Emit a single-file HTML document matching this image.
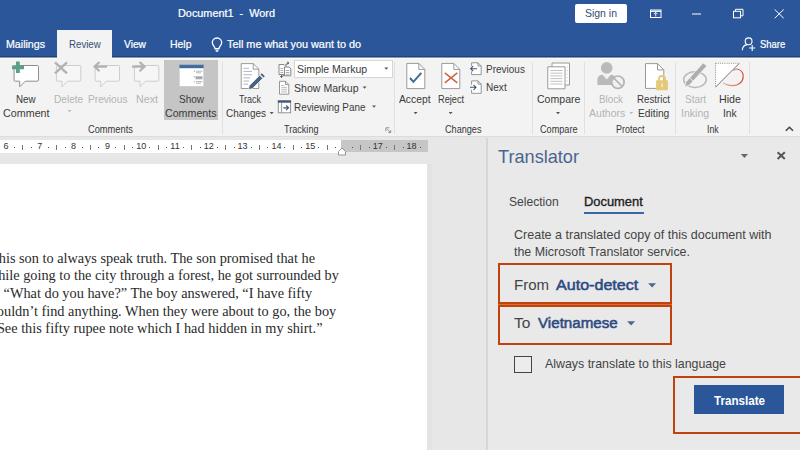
<!DOCTYPE html>
<html><head><meta charset="utf-8">
<style>
*{box-sizing:border-box;margin:0;padding:0}
html,body{width:800px;height:450px;overflow:hidden;background:#e7e7e7;font-family:"Liberation Sans",sans-serif;}
body{position:relative}
.abs{position:absolute}
.t{position:absolute;white-space:nowrap;line-height:1;transform-origin:left top}
.doc{font-family:"Liberation Serif",serif;font-size:14.3px;color:#2a2a2a;transform:none}
.rn{top:142px;font-size:9px;color:#333;transform:translateX(-50%)}
#title{left:0;top:0;width:800px;height:57.4px;background:#2b579a}
#ribbon{left:0;top:57.4px;width:800px;height:79.6px;background:#f3f3f3;border-bottom:1px solid #dcdcdc}
.sep{position:absolute;top:62px;width:1px;height:72px;background:#e0e0e0}
svg{position:absolute;overflow:visible}
</style></head><body>
<div id="title" class="abs"></div>
<div class="abs" style="left:0;top:56px;width:800px;height:1px;background:#20447a"></div>
<div class="abs" style="left:575px;top:4px;width:52px;height:18.5px;background:#fff;border-radius:2px"></div>
<div id="ribbon" class="abs"></div>
<div class="abs" style="left:0;top:57px;width:800px;height:1px;background:#8799b1"></div>
<div class="abs" style="left:0;top:58px;width:800px;height:1px;background:#f9fbfb"></div>
<div class="abs" style="left:57px;top:30px;width:55px;height:29px;background:#f3f3f3"></div>
<div class="abs" style="left:164px;top:59.8px;width:54.2px;height:60px;background:#c5c5c5"></div>
<div class="sep" style="left:222px"></div>
<div class="abs" style="left:293.6px;top:60.4px;width:99.3px;height:18px;background:#fff;border:1px solid #d6d6d6"></div>
<div class="sep" style="left:394.3px"></div>
<div class="sep" style="left:532px"></div>
<div class="sep" style="left:584px"></div>
<div class="sep" style="left:675px"></div>
<div class="sep" style="left:749px"></div>

<!-- ruler -->
<div class="abs" style="left:0;top:140px;width:341px;height:13px;background:#fff"></div>
<div class="abs" style="left:341px;top:140px;width:86.5px;height:12px;background:#c6c6c6"></div>

<!-- page -->
<div class="abs" style="left:487px;top:137px;width:313px;height:313px;background:#e9e9e9"></div>
<div class="abs" style="left:0;top:163.5px;width:431.5px;height:287px;background:#e3e3e3"></div>
<div class="abs" style="left:0;top:163.5px;width:427.3px;height:287px;background:#fff"></div>

<!-- pane -->
<div class="abs" style="left:485.7px;top:138px;width:2px;height:312px;background:#d6d6d6"></div>
<div class="abs" style="left:583.8px;top:212.3px;width:60.5px;height:1.9px;background:#3a66a5"></div>
<div class="abs" style="left:498.3px;top:303px;width:173.7px;height:3px;background:#dd6a2e"></div>
<div class="abs" style="left:498.3px;top:262.7px;width:173.7px;height:41.3px;border:2.6px solid #c0430d"></div>
<div class="abs" style="left:498.3px;top:304.7px;width:173.7px;height:40.6px;border:2.6px solid #c0430d"></div>
<div class="abs" style="left:514px;top:355.5px;width:18px;height:17.5px;border:1.4px solid #444;background:#ececec"></div>
<div class="abs" style="left:672.5px;top:376px;width:130px;height:57.5px;border:2.6px solid #c0430d"></div>
<div class="abs" style="left:694px;top:385.4px;width:89.6px;height:28.2px;background:#2b579a"></div>
<svg width="800" height="450" viewBox="0 0 800 450" style="left:0;top:0" fill="none">
<!-- title bar icons -->
<g stroke="#fff" stroke-width="1">
 <!-- bulb -->
 <path d="M217 38c-2.900 0-4.700 2.100-4.700 4.600 0 1.600 .8 2.600 1.600 3.600 .7 .8 1.100 1.400 1.100 2.400h4c0-1 .4-1.600 1.100-2.400 .8-1 1.600-2 1.600-3.600 0-2.500-1.800-4.600-4.700-4.600z" stroke-width="1.300"/>
 <path d="M215.300 50h3.400M215.800 51.300h2.400" stroke-width="1.100"/>
 <!-- ribbon display -->
 <rect x="650.500" y="10" width="10.500" height="7.500"/>
 <path d="M650.500 11.300h10.500" stroke-width="1.200"/>
 <path d="M655.750 16.500v-4M653.900 14.200l1.850-1.850 1.850 1.850" stroke-width=".9"/>
 <!-- minimize -->
 <path d="M692 14h9"/>
 <!-- restore -->
 <rect x="733.500" y="11.300" width="7" height="6.500"/>
 <path d="M735.500 11.300v-2h7.500v6.500h-2"/>
 <!-- close -->
 <path d="M774.700 9.500l9 8.700M783.700 9.500l-9 8.700"/>
 <!-- share -->
 <circle cx="748.600" cy="41.300" r="3.400" stroke-width="1.100"/>
 <path d="M742.300 50.300c.2-3.400 2.300-5.400 5-5.700" stroke-width="1.100"/>
 <path d="M752.200 45v6M749.200 48h6" stroke-width="1.100"/>
</g>
<!-- New comment -->
<g>
 <path d="M15.300 65.500h22a1.200 1.200 0 0 1 1.200 1.200v13.300a1.200 1.200 0 0 1-1.200 1.200h-12l-5.600 5.600v-5.600h-4.400a1.200 1.200 0 0 1-1.200-1.200v-13.300a1.200 1.200 0 0 1 1.200-1.200z" fill="#fff" stroke="#8e8e8e" stroke-width="1"/>
 <path d="M12 67.400h12M17.900 61.500v11.600" stroke="#5b9f8a" stroke-width="3.800"/>
</g>
<!-- Delete -->
<g>
 <path d="M57.600 65.500h22a1.200 1.200 0 0 1 1.200 1.200v13.300a1.200 1.200 0 0 1-1.200 1.200h-12l-5.600 5.600v-5.600h-4.400a1.200 1.200 0 0 1-1.200-1.200v-13.300a1.200 1.200 0 0 1 1.200-1.200z" fill="#f6f6f6" stroke="#cdcdcd" stroke-width="1"/>
 <path d="M55 62.300l12 11M67 62.300l-12 11" stroke="#b2b2b2" stroke-width="2.300"/>
</g>
<!-- Previous -->
<g>
 <path d="M96.300 65.500h22a1.200 1.200 0 0 1 1.200 1.200v13.300a1.200 1.200 0 0 1-1.200 1.200h-12l-5.600 5.600v-5.600h-4.400a1.200 1.200 0 0 1-1.200-1.200v-13.300a1.200 1.200 0 0 1 1.200-1.200z" fill="#f6f6f6" stroke="#cdcdcd" stroke-width="1"/>
 <path d="M107 66.600h-12M99.500 62l-4.900 4.600 4.900 4.600" stroke="#b2b2b2" stroke-width="2.200"/>
</g>
<!-- Next -->
<g>
 <path d="M135.600 65.500h22a1.200 1.200 0 0 1 1.200 1.200v13.300a1.200 1.200 0 0 1-1.200 1.200h-12l-5.600 5.600v-5.600h-4.400a1.200 1.200 0 0 1-1.200-1.200v-13.300a1.200 1.200 0 0 1 1.200-1.200z" fill="#f6f6f6" stroke="#cdcdcd" stroke-width="1"/>
 <path d="M132 66.600h12M139.600 62l4.900 4.600-4.900 4.600" stroke="#b2b2b2" stroke-width="2.200"/>
</g>
<!-- Show comments -->
<g>
 <rect x="179" y="64.600" width="25" height="22" fill="#fff"/>
 <rect x="179" y="64.600" width="25" height="3.600" fill="#3f6a9b"/>
 <rect x="179.250" y="64.850" width="24.500" height="21.500" stroke="#a9b4c0" stroke-width=".5"/>
 <path d="M196 71.200h6.500M196 72.800h5" stroke="#9a9a9a" stroke-width=".7"/>
 <rect x="195.500" y="76.300" width="7" height="3" fill="#a3a9af"/>
 <path d="M196 81.600h6.500M196 83.200h5" stroke="#9a9a9a" stroke-width=".7"/>
 <path d="M194.300 70.500v1.500M194.300 76v1.500M194.300 81v1.500" stroke="#888" stroke-width=".7"/>
</g>
<!-- Track changes -->
<g>
 <path d="M241.200 63.600h12l5.600 5.600v19.300h-17.600z" fill="#fff" stroke="#9a9a9a" stroke-width="1"/>
 <path d="M253.200 63.600v5.600h5.600" stroke="#9a9a9a" stroke-width="1"/>
 <path d="M243.500 68.300h5.500M243.500 74.700h8.500M243.500 81h5.500" stroke="#a5a5a5" stroke-width=".8"/>
 <path d="M243.500 71.400h8.500M243.500 77.900h6.500M243.500 84.200h4.500" stroke="#8aa5c3" stroke-width=".8"/>
 <path d="M248.300 89.600l1.100-4 10.300-10.300 3 3-10.300 10.300z" fill="#47627f" stroke="#f3f3f3" stroke-width=".7"/>
 <path d="M260.500 74.500l1.300-1.300 3 3-1.300 1.300z" fill="#47627f"/>
</g>
<!-- Display for review small icon -->
<g stroke="#7a7a7a" stroke-width=".9">
 <path d="M279 64.500h5l2 2v8h-7z" fill="#fff"/>
 <path d="M284.500 67h4.500l1.800 1.800v7h-6.300z" fill="#fff"/>
 <path d="M280.300 68.500h3M280.300 70.500h3M280.300 72.500h3M285.800 70.500h3.500M285.800 72.500h3.500M285.800 74.300h3.500" stroke-width=".6"/>
 <path d="M286 65.500c0-1.500 1-2.500 2.500-2.500M287.400 62l1.400 1-1.400 1.200" stroke="#444" stroke-width="1"/>
 <path d="M283.500 75.300c0 .8-1 1.200-2.500 1.200M282 75.500l-1.400 1 1.400 1.200" stroke="#444" stroke-width="1"/>
</g>
<!-- Show markup small icon -->
<g stroke="#8a8a8a" stroke-width=".9">
 <path d="M279.500 81.300h6l3.300 3.300v9.600h-9.300z" fill="#fff"/>
 <path d="M285.500 81.300v3.300h3.300" />
 <path d="M281.300 85.500h3M281.300 87.700h5.700M281.300 89.800h5.700M281.300 91.900h5.700" stroke-width=".6"/>
</g>
<!-- Reviewing pane small icon -->
<g>
 <rect x="278.300" y="101" width="12.300" height="11.800" fill="#fff" stroke="#8a8a8a" stroke-width=".9"/>
 <rect x="277.850" y="100.400" width="13.200" height="2.300" fill="#3f5675"/>
 <path d="M281.600 102.700v10" stroke="#8a8a8a" stroke-width=".9"/>
 <path d="M283.300 107.800h5M286.100 105.400l2.400 2.400-2.400 2.400" stroke="#43566f" stroke-width="1.200"/>
</g>
<!-- dropdown arrows in ribbon -->
<g fill="#555">
 <path d="M69.500 112.200l-2 -2.200h4z" fill="#bdbdbd"/>
 <path d="M271.700 114.300l-2-2.2h4z"/>
 <path d="M386.300 69.800l-2-2.200h4z"/>
 <path d="M364.600 88.700l-2-2.2h4z"/>
 <path d="M374 107.800l-2-2.2h4z"/>
 <path d="M415.600 114.300l-2-2.2h4z"/>
 <path d="M450.600 114.300l-2-2.2h4z"/>
 <path d="M558 114.300l-2-2.2h4z"/>
 <path d="M631.300 114.300l-2-2.2h4z" fill="#bdbdbd"/>
</g>
<!-- dialog launcher -->
<g stroke="#777" stroke-width=".8" transform="translate(1.4 .3)">
 <path d="M384.500 131v-3.500h3.500"/>
 <path d="M386 129l3 3M389.300 129.800v2.500h-2.500"/>
</g>
<!-- Accept -->
<g>
 <path d="M406.800 63.400h12l6 6v19.200h-18z" fill="#fff" stroke="#9a9a9a" stroke-width="1"/>
 <path d="M418.800 63.400v6h6" stroke="#9a9a9a" stroke-width="1"/>
 <path d="M410 78l3.400 3.800 7.900-9" stroke="#3f6c93" stroke-width="2"/>
</g>
<!-- Reject -->
<g>
 <path d="M441.800 63.400h12l6 6v19.200h-18z" fill="#fff" stroke="#9a9a9a" stroke-width="1"/>
 <path d="M453.800 63.400v6h6" stroke="#9a9a9a" stroke-width="1"/>
 <path d="M444.800 72.800l12.500 10M457.300 72.800l-12.500 10" stroke="#d0623f" stroke-width="1.500"/>
</g>
<!-- Previous/Next change small -->
<g stroke="#8a8a8a" stroke-width=".9">
 <path d="M471.600 66.300v-3.500h6.400l3.200 3.200v8.600h-9.600v-3.400" fill="#fff"/>
 <path d="M478 62.800v3.200h3.200"/>
 <path d="M477 68.700h-6M473.200 66.200l-2.500 2.500 2.500 2.500" stroke="#3f5673" stroke-width="1.100" fill="none"/>
 <path d="M471.600 84.800v-3.900h6.400l3.200 3.200v9.200h-9.600v-3.600" fill="#fff"/>
 <path d="M478 80.900v3.200h3.200"/>
 <path d="M470 87.300h6M473.500 84.800l2.500 2.500-2.500 2.500" stroke="#3f5673" stroke-width="1.100" fill="none"/>
</g>
<!-- Compare -->
<g stroke="#9a9a9a" stroke-width="1">
 <path d="M552 63h17.500v22h-17.500z" fill="#fff"/>
 <path d="M547.800 66.800h17.200v22h-17.200z" fill="#fff"/>
 <path d="M550.300 70.500h12.200M550.300 73.200h12.200M550.300 75.900h12.200M550.300 78.600h12.200M550.300 81.300h12.200M550.300 84h12.200" stroke-width=".7" stroke="#a8a8a8"/>
 <path d="M567.200 66.500v1M567.200 70v1M567.200 73.500v1M567.200 77v1M567.200 80.500v1" stroke-width=".7" stroke="#a8a8a8"/>
</g>
<!-- Block authors -->
<g>
 <circle cx="606.700" cy="67.900" r="5.800" fill="#bababa"/>
 <path d="M597.400 85v-5c0-3.300 2.300-5.200 5.300-5.200l4 4.600 4-4.600c3 0 5.300 1.900 5.300 5.200v5z" fill="#bababa"/>
 <circle cx="617.900" cy="82.200" r="6.200" fill="#f1f1f1" stroke="#b4b4b4" stroke-width="1.700"/>
 <path d="M613.600 77.900l8.600 8.600" stroke="#b4b4b4" stroke-width="1.700"/>
</g>
<!-- Restrict editing -->
<g>
 <path d="M645.500 63.600h12l6.300 6.300v18.500h-18.300z" fill="#fff" stroke="#9a9a9a" stroke-width="1"/>
 <path d="M657.500 63.600v6.300h6.300" stroke="#9a9a9a" stroke-width="1"/>
 <path d="M659 81v-2a3 3 0 0 1 6 0v2" stroke="#e3c878" stroke-width="1.800"/>
 <rect x="656.100" y="80.300" width="11.800" height="9.900" rx=".8" fill="#e5c978"/>
 <rect x="661.300" y="83.500" width="1.400" height="3.600" fill="#f8efd0"/>
</g>
<!-- Start inking -->
<g>
 <ellipse cx="695" cy="79.600" rx="11.300" ry="7.900" stroke="#b9b9b9" stroke-width="1.500"/>
 <path d="M684.500 87.200L686.100 81.700L703.200 62.900L706.800 66.100L689.600 84.900Z" fill="#adadad" stroke="#f3f3f3" stroke-width=".8"/>
 <path d="M689.600 77.800l3.600 3.300" stroke="#f3f3f3" stroke-width=".9"/>
</g>
<!-- Hide ink -->
<defs><linearGradient id="hg" x1="723" y1="0" x2="743" y2="0" gradientUnits="userSpaceOnUse"><stop offset="0" stop-color="#e9b9ad"/><stop offset=".55" stop-color="#dc7a63"/><stop offset="1" stop-color="#d2452b"/></linearGradient></defs>
<g>
 <path d="M715.500 87v-23.700h23.500z" fill="#fff"/>
 <path d="M715.500 63.300h24M715.500 63.300v24" stroke="#777" stroke-width=".8" stroke-dasharray="1 1.200"/>
 <path d="M715.500 87.200l23.800-23.900" stroke="#666" stroke-width=".9"/>
 <path d="M733.500 70.500C736.500 67.300 743.300 70 743.200 76.500C743.100 82.500 738 85.600 733 85.600C729 85.600 725.500 84.600 723 82.800" stroke="url(#hg)" stroke-width="1.100"/>
</g>
<!-- collapse caret -->
<path d="M785.800 130.800l3.600-3.600 3.600 3.600" stroke="#444" stroke-width="1.500"/>
<!-- ruler indent marker -->
<path d="M338.500 155v-3.500l3.500-3.500 3.500 3.500v3.500z" fill="#fff" stroke="#8a8a8a" stroke-width=".9"/>
<!-- pane icons -->
<path d="M744.400 158l-3.600-4h7.200z" fill="#666"/>
<path d="M777.600 152.200l7.200 6.800M784.800 152.200l-7.200 6.800" stroke="#555" stroke-width="2"/>
<path d="M652.100 287.500l-4-4.300h8z" fill="#4d668f"/>
<path d="M631.100 325.600l-4-4.300h8z" fill="#4d668f"/>
</svg>

<div class="t" style="left:177.5px;top:8.4px;font-size:10.8px;color:#fff;-webkit-text-stroke:.22px currentColor;transform:scaleX(1.006)">Document1&nbsp; -&nbsp; Word</div>
<div class="t" style="left:5.5px;top:38.9px;font-size:10.8px;color:#fff;-webkit-text-stroke:.22px currentColor;transform:scaleX(0.985)">Mailings</div>
<div class="t" style="left:68.8px;top:38.9px;font-size:10.8px;color:#364d75;transform:scaleX(0.897)">Review</div>
<div class="t" style="left:123.8px;top:38.9px;font-size:10.8px;color:#fff;-webkit-text-stroke:.22px currentColor;transform:scaleX(0.948)">View</div>
<div class="t" style="left:169.5px;top:38.9px;font-size:10.8px;color:#fff;-webkit-text-stroke:.22px currentColor;transform:scaleX(0.968)">Help</div>
<div class="t" style="left:226.8px;top:38.9px;font-size:10.8px;color:#fff;-webkit-text-stroke:.22px currentColor;transform:scaleX(1.007)">Tell me what you want to do</div>
<div class="t" style="left:585.0px;top:8.4px;font-size:10.8px;color:#364d75;transform:scaleX(0.969)">Sign in</div>
<div class="t" style="left:760.4px;top:38.9px;font-size:10.8px;color:#fff;-webkit-text-stroke:.22px currentColor;transform:scaleX(0.875)">Share</div>
<div class="t" style="left:16.4px;top:93.6px;font-size:10.8px;color:#3a3a3a;transform:scaleX(0.907)">New</div>
<div class="t" style="left:2.8px;top:108.0px;font-size:10.8px;color:#3a3a3a;transform:scaleX(0.995)">Comment</div>
<div class="t" style="left:54.4px;top:93.6px;font-size:10.8px;color:#b4b4b4;transform:scaleX(0.935)">Delete</div>
<div class="t" style="left:88.0px;top:93.6px;font-size:10.8px;color:#b4b4b4;transform:scaleX(0.940)">Previous</div>
<div class="t" style="left:135.5px;top:93.6px;font-size:10.8px;color:#b4b4b4;transform:scaleX(0.991)">Next</div>
<div class="t" style="left:178.9px;top:93.6px;font-size:10.8px;color:#3a3a3a;transform:scaleX(0.929)">Show</div>
<div class="t" style="left:165.0px;top:108.0px;font-size:10.8px;color:#3a3a3a;transform:scaleX(0.987)">Comments</div>
<div class="t" style="left:238.6px;top:93.6px;font-size:10.8px;color:#3a3a3a;transform:scaleX(0.827)">Track</div>
<div class="t" style="left:225.5px;top:108.0px;font-size:10.8px;color:#3a3a3a;transform:scaleX(0.925)">Changes</div>
<div class="t" style="left:296.8px;top:63.5px;font-size:10.8px;color:#3a3a3a;transform:scaleX(0.975)">Simple Markup</div>
<div class="t" style="left:294.0px;top:82.5px;font-size:10.8px;color:#3a3a3a;transform:scaleX(0.979)">Show Markup</div>
<div class="t" style="left:294.0px;top:101.5px;font-size:10.8px;color:#3a3a3a;transform:scaleX(0.916)">Reviewing Pane</div>
<div class="t" style="left:399.4px;top:93.6px;font-size:10.8px;color:#3a3a3a;transform:scaleX(0.954)">Accept</div>
<div class="t" style="left:437.5px;top:93.6px;font-size:10.8px;color:#3a3a3a;transform:scaleX(0.853)">Reject</div>
<div class="t" style="left:486.0px;top:64.0px;font-size:10.8px;color:#3a3a3a;transform:scaleX(0.926)">Previous</div>
<div class="t" style="left:486.0px;top:81.8px;font-size:10.8px;color:#3a3a3a;transform:scaleX(0.932)">Next</div>
<div class="t" style="left:536.6px;top:93.6px;font-size:10.8px;color:#3a3a3a;transform:scaleX(0.977)">Compare</div>
<div class="t" style="left:599.0px;top:93.6px;font-size:10.8px;color:#b4b4b4;transform:scaleX(0.909)">Block</div>
<div class="t" style="left:589.0px;top:108.0px;font-size:10.8px;color:#b4b4b4;transform:scaleX(0.975)">Authors</div>
<div class="t" style="left:637.3px;top:93.6px;font-size:10.8px;color:#3a3a3a;transform:scaleX(0.902)">Restrict</div>
<div class="t" style="left:637.9px;top:108.0px;font-size:10.8px;color:#3a3a3a;transform:scaleX(0.948)">Editing</div>
<div class="t" style="left:684.6px;top:93.6px;font-size:10.8px;color:#b4b4b4;transform:scaleX(0.921)">Start</div>
<div class="t" style="left:680.7px;top:108.0px;font-size:10.8px;color:#b4b4b4;transform:scaleX(0.975)">Inking</div>
<div class="t" style="left:718.9px;top:93.6px;font-size:10.8px;color:#3a3a3a;transform:scaleX(0.986)">Hide</div>
<div class="t" style="left:723.0px;top:108.0px;font-size:10.8px;color:#3a3a3a;transform:scaleX(0.951)">Ink</div>
<div class="t" style="left:87.6px;top:124.7px;font-size:10px;color:#383838;transform:scaleX(0.928)">Comments</div>
<div class="t" style="left:284.0px;top:124.7px;font-size:10px;color:#383838;transform:scaleX(0.908)">Tracking</div>
<div class="t" style="left:445.0px;top:124.7px;font-size:10px;color:#383838;transform:scaleX(0.912)">Changes</div>
<div class="t" style="left:539.8px;top:124.7px;font-size:10px;color:#383838;transform:scaleX(0.913)">Compare</div>
<div class="t" style="left:616.0px;top:124.7px;font-size:10px;color:#383838;transform:scaleX(0.896)">Protect</div>
<div class="t" style="left:706.5px;top:124.7px;font-size:10px;color:#383838;transform:scaleX(0.862)">Ink</div>
<div class="t" style="left:498.0px;top:146.7px;font-size:19px;color:#4a6590;transform:scaleX(0.955)">Translator</div>
<div class="t" style="left:508.5px;top:195.2px;font-size:13px;color:#444;transform:scaleX(0.929)">Selection</div>
<div class="t" style="left:584.0px;top:195.2px;font-size:13px;color:#222;-webkit-text-stroke:.35px currentColor;transform:scaleX(0.991)">Document</div>
<div class="t" style="left:514.4px;top:227.7px;font-size:13px;color:#444;transform:scaleX(0.963)">Create a translated copy of this document with</div>
<div class="t" style="left:514.4px;top:244.5px;font-size:13px;color:#444;transform:scaleX(0.955)">the Microsoft Translator service.</div>
<div class="t" style="left:513.9px;top:276.6px;font-size:15.5px;color:#444;transform:scaleX(0.970)">From</div>
<div class="t" style="left:556.4px;top:276.6px;font-size:15.5px;color:#2c4a82;-webkit-text-stroke:.55px currentColor;transform:scaleX(1.038)">Auto-detect</div>
<div class="t" style="left:513.9px;top:314.7px;font-size:15.5px;color:#444;transform:scaleX(1.002)">To</div>
<div class="t" style="left:538.1px;top:314.7px;font-size:15.5px;color:#2c4a82;-webkit-text-stroke:.55px currentColor;transform:scaleX(0.978)">Vietnamese</div>
<div class="t" style="left:545.0px;top:356.5px;font-size:13px;color:#444;transform:scaleX(0.952)">Always translate to this language</div>
<div class="t" style="left:713.6px;top:394.8px;font-size:12.5px;color:#fff;font-weight:700;transform:scaleX(0.929)">Translate</div>
<div class="t doc" style="right:485.0px;top:250.9px">his son to always speak truth. The son promised that he</div>
<div class="t doc" style="right:461.2px;top:268.4px">hile going to the city through a forest, he got surrounded by</div>
<div class="t doc" style="right:487.8px;top:286.4px">. “What do you have?” The boy answered, “I have fifty</div>
<div class="t doc" style="right:463.8px;top:303.9px">ouldn’t find anything. When they were about to go, the boy</div>
<div class="t doc" style="right:477.5px;top:321.4px">See this fifty rupee note which I had hidden in my shirt.”</div>
<div class="t rn" style="left:6.0px">6</div>
<div class="abs" style="left:13.9px;top:146.5px;width:1px;height:1px;background:#555"></div>
<div class="abs" style="left:22.4px;top:144.6px;width:1px;height:5px;background:#777"></div>
<div class="abs" style="left:30.9px;top:146.5px;width:1px;height:1px;background:#555"></div>
<div class="t rn" style="left:39.8px">7</div>
<div class="abs" style="left:47.8px;top:146.5px;width:1px;height:1px;background:#555"></div>
<div class="abs" style="left:56.2px;top:144.6px;width:1px;height:5px;background:#777"></div>
<div class="abs" style="left:64.7px;top:146.5px;width:1px;height:1px;background:#555"></div>
<div class="t rn" style="left:73.6px">8</div>
<div class="abs" style="left:81.5px;top:146.5px;width:1px;height:1px;background:#555"></div>
<div class="abs" style="left:90.0px;top:144.6px;width:1px;height:5px;background:#777"></div>
<div class="abs" style="left:98.4px;top:146.5px;width:1px;height:1px;background:#555"></div>
<div class="t rn" style="left:107.4px">9</div>
<div class="abs" style="left:115.3px;top:146.5px;width:1px;height:1px;background:#555"></div>
<div class="abs" style="left:123.8px;top:144.6px;width:1px;height:5px;background:#777"></div>
<div class="abs" style="left:132.2px;top:146.5px;width:1px;height:1px;background:#555"></div>
<div class="t rn" style="left:141.2px">10</div>
<div class="abs" style="left:149.1px;top:146.5px;width:1px;height:1px;background:#555"></div>
<div class="abs" style="left:157.6px;top:144.6px;width:1px;height:5px;background:#777"></div>
<div class="abs" style="left:166.0px;top:146.5px;width:1px;height:1px;background:#555"></div>
<div class="t rn" style="left:175.0px">11</div>
<div class="abs" style="left:182.9px;top:146.5px;width:1px;height:1px;background:#555"></div>
<div class="abs" style="left:191.4px;top:144.6px;width:1px;height:5px;background:#777"></div>
<div class="abs" style="left:199.8px;top:146.5px;width:1px;height:1px;background:#555"></div>
<div class="t rn" style="left:208.8px">12</div>
<div class="abs" style="left:216.7px;top:146.5px;width:1px;height:1px;background:#555"></div>
<div class="abs" style="left:225.2px;top:144.6px;width:1px;height:5px;background:#777"></div>
<div class="abs" style="left:233.6px;top:146.5px;width:1px;height:1px;background:#555"></div>
<div class="t rn" style="left:242.6px">13</div>
<div class="abs" style="left:250.5px;top:146.5px;width:1px;height:1px;background:#555"></div>
<div class="abs" style="left:259.0px;top:144.6px;width:1px;height:5px;background:#777"></div>
<div class="abs" style="left:267.4px;top:146.5px;width:1px;height:1px;background:#555"></div>
<div class="t rn" style="left:276.4px">14</div>
<div class="abs" style="left:284.3px;top:146.5px;width:1px;height:1px;background:#555"></div>
<div class="abs" style="left:292.8px;top:144.6px;width:1px;height:5px;background:#777"></div>
<div class="abs" style="left:301.2px;top:146.5px;width:1px;height:1px;background:#555"></div>
<div class="t rn" style="left:310.2px">15</div>
<div class="abs" style="left:318.1px;top:146.5px;width:1px;height:1px;background:#555"></div>
<div class="abs" style="left:326.6px;top:144.6px;width:1px;height:5px;background:#777"></div>
<div class="abs" style="left:335.1px;top:146.5px;width:1px;height:1px;background:#555"></div>
<div class="abs" style="left:351.9px;top:146.5px;width:1px;height:1px;background:#555"></div>
<div class="abs" style="left:360.4px;top:144.6px;width:1px;height:5px;background:#777"></div>
<div class="abs" style="left:368.9px;top:146.5px;width:1px;height:1px;background:#555"></div>
<div class="t rn" style="left:377.8px">17</div>
<div class="abs" style="left:385.7px;top:146.5px;width:1px;height:1px;background:#555"></div>
<div class="abs" style="left:394.2px;top:144.6px;width:1px;height:5px;background:#777"></div>
<div class="abs" style="left:402.6px;top:146.5px;width:1px;height:1px;background:#555"></div>
<div class="t rn" style="left:411.6px">18</div>
<div class="abs" style="left:419.5px;top:146.5px;width:1px;height:1px;background:#555"></div>
</body></html>
